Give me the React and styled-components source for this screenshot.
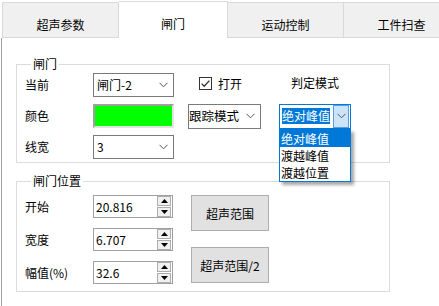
import React from 'react';
import styled, { createGlobalStyle, css } from 'styled-components';

const GlobalStyle = createGlobalStyle`
  html, body {
    margin: 0;
    padding: 0;
    background: #fff;
  }
  body {
    font-family: "Noto Sans CJK SC", "Liberation Sans", sans-serif;
    font-size: 12px;
    color: #000;
  }
`;

const Chevron = () => (
  <svg width="9" height="6" viewBox="0 0 9 6">
    <path d="M0.5 0.8 L4.5 4.8 L8.5 0.8" fill="none" stroke="#555" strokeWidth="1" />
  </svg>
);

const Tick = () => (
  <svg width="13" height="13" viewBox="0 0 13 13">
    <rect x="0.5" y="0.5" width="12" height="12" fill="#fff" stroke="#333" />
    <path d="M2.6 6.6 L5.2 9.2 L10.4 3.6" fill="none" stroke="#333" strokeWidth="1.3" />
  </svg>
);

const Arrow = ({ down }) => (
  <svg width="7" height="4" viewBox="0 0 7 4">
    <path d={down ? 'M0 0 H7 L3.5 4 Z' : 'M0 4 H7 L3.5 0 Z'} fill="#000" />
  </svg>
);

export default function App() {
  return (
    <Root>
      <GlobalStyle />
      <TabBar>
        <Tab width={117}>超声参数</Tab>
        <Tab width={109} active>闸门</Tab>
        <Tab width={116}>运动控制</Tab>
        <Tab width={116}>工件扫查</Tab>
      </TabBar>
      <Panel>
        <Group>
          <Legend>闸门</Legend>
          <GateGrid>
            <Label>当前</Label>
            <Combo>
              <span>闸门-2</span>
              <Chevron />
            </Combo>
            <CheckCell>
              <Tick />
              <span>打开</span>
            </CheckCell>
            <CenterText>判定模式</CenterText>

            <Label>颜色</Label>
            <ColorSwatch color="#00ff00" />
            <Combo tight>
              <span>跟踪模式</span>
              <Chevron />
            </Combo>
            <DropWrap>
              <FocusCombo>
                <Selected>绝对峰值</Selected>
                <DropButton>
                  <Chevron />
                </DropButton>
              </FocusCombo>
              <DropList>
                <DropItem active>绝对峰值</DropItem>
                <DropItem>渡越峰值</DropItem>
                <DropItem>渡越位置</DropItem>
              </DropList>
            </DropWrap>

            <Label>线宽</Label>
            <Combo>
              <span>3</span>
              <Chevron />
            </Combo>
          </GateGrid>
        </Group>

        <Group second>
          <Legend>闸门位置</Legend>
          <PosRow>
            <SpinGrid>
              <Label>开始</Label>
              <Spin>
                <span>20.816</span>
                <SpinButtons>
                  <SpinBtn><Arrow /></SpinBtn>
                  <SpinBtn><Arrow down /></SpinBtn>
                </SpinButtons>
              </Spin>
              <Label>宽度</Label>
              <Spin>
                <span>6.707</span>
                <SpinButtons>
                  <SpinBtn><Arrow /></SpinBtn>
                  <SpinBtn><Arrow down /></SpinBtn>
                </SpinButtons>
              </Spin>
              <Label>幅值(%)</Label>
              <Spin>
                <span>32.6</span>
                <SpinButtons>
                  <SpinBtn><Arrow /></SpinBtn>
                  <SpinBtn><Arrow down /></SpinBtn>
                </SpinButtons>
              </Spin>
            </SpinGrid>
            <ButtonCol>
              <PushButton>超声范围</PushButton>
              <PushButton>超声范围/2</PushButton>
            </ButtonCol>
          </PosRow>
        </Group>
      </Panel>
    </Root>
  );
}

const Root = styled.div`
  width: 439px;
  height: 306px;
  overflow: hidden;
  background: #fff;
  display: flex;
  flex-direction: column;
`;

const TabBar = styled.div`
  display: flex;
  align-items: flex-end;
  height: 38px;
  padding-left: 2px;
  flex-shrink: 0;
`;

const Tab = styled.div`
  flex: 0 0 ${p => p.width}px;
  box-sizing: border-box;
  height: 36px;
  display: flex;
  align-items: center;
  justify-content: center;
  padding-top: 9px;
  background: #f0f0f0;
  border: 1px solid #d9d9d9;
  border-left: none;
  white-space: nowrap;
  &:first-child {
    border-left: 1px solid #d9d9d9;
  }
  ${p => p.active && css`
    height: 37px;
    background: #fff;
    border-bottom: none;
    padding-top: 7px;
  `}
`;

const Panel = styled.div`
  flex: 1;
  margin-left: 1px;
  border-left: 1px solid #a0a0a0;
  padding: 18px 0 0 14px;
`;

const Group = styled.fieldset`
  box-sizing: border-box;
  width: 374px;
  margin: ${p => (p.second ? '10px' : '0')} 0 0 0;
  border: 1px solid #dcdcdc;
  padding: ${p => (p.second ? '6px 0 7px 8px' : '1px 0 3px 8px')};
  min-width: 0;
`;

const Legend = styled.legend`
  padding: 0 2px;
  margin-left: 6px;
  line-height: 16px;
  font-size: 12px;
`;

const GateGrid = styled.div`
  display: grid;
  grid-template-columns: 68px 95px 91px 72px;
  grid-auto-rows: 24px;
  row-gap: 7px;
  align-items: center;
`;

const Label = styled.div`
  line-height: 16px;
  white-space: nowrap;
`;

const Combo = styled.div`
  box-sizing: border-box;
  width: ${p => (p.tight ? '73px' : '81px')};
  height: ${p => (p.tight ? '25px' : '24px')};
  border: 1px solid #7a7a7a;
  background: #fff;
  display: flex;
  align-items: center;
  justify-content: space-between;
  padding: 0 5px 0 ${p => (p.tight ? '0' : '3px')};
  white-space: nowrap;
  span {
    line-height: 16px;
    font-size: ${p => (p.tight ? '12.5px' : '12px')};
  }
`;

const CheckCell = styled.div`
  display: flex;
  align-items: center;
  gap: 6px;
  padding-left: 11px;
  margin-top: -4px;
  svg {
    flex-shrink: 0;
  }
`;

const CenterText = styled.div`
  text-align: center;
  margin-top: -4px;
  line-height: 16px;
`;

const ColorSwatch = styled.div`
  box-sizing: border-box;
  width: 81px;
  height: 24px;
  background: ${p => p.color};
  border: 2px solid;
  border-color: #a0a0a0 #e3e3e3 #e3e3e3 #a0a0a0;
`;

const DropWrap = styled.div`
  position: relative;
  width: 72px;
  height: 25px;
`;

const FocusCombo = styled.div`
  box-sizing: border-box;
  width: 72px;
  height: 25px;
  border: 1px solid #0078d7;
  background: #fff;
  display: flex;
  align-items: center;
  justify-content: space-between;
  padding: 0 1px 0 2px;
`;

const Selected = styled.span`
  background: #0078d7;
  color: #fff;
  line-height: 16px;
  font-size: 12px;
  white-space: nowrap;
`;

const DropButton = styled.div`
  box-sizing: border-box;
  width: 16px;
  height: 23px;
  background: #cce4f7;
  border: 1px solid #569de5;
  display: flex;
  align-items: center;
  justify-content: center;
`;

const DropList = styled.div`
  position: absolute;
  left: 0;
  top: 25px;
  box-sizing: border-box;
  width: 72px;
  border: 1px solid #0078d7;
  background: #fff;
  box-shadow: 3px 3px 3px rgba(0, 0, 0, 0.35);
  z-index: 10;
`;

const DropItem = styled.div`
  height: 17px;
  line-height: 17px;
  padding-left: 1px;
  font-size: 12px;
  white-space: nowrap;
  overflow: hidden;
  ${p => p.active && css`
    background: #0078d7;
    color: #fff;
  `}
`;

const PosRow = styled.div`
  display: flex;
  align-items: flex-start;
`;

const SpinGrid = styled.div`
  display: grid;
  grid-template-columns: 68px 80px;
  grid-auto-rows: 23px;
  row-gap: 10px;
  align-items: center;
`;

const Spin = styled.div`
  box-sizing: border-box;
  width: 80px;
  height: 23px;
  border: 1px solid #a0a0a0;
  background: #fff;
  display: flex;
  align-items: center;
  justify-content: space-between;
  padding: 0 1px 0 2px;
  span {
    line-height: 16px;
  }
`;

const SpinButtons = styled.div`
  display: flex;
  flex-direction: column;
  gap: 1px;
  width: 14px;
`;

const SpinBtn = styled.div`
  box-sizing: border-box;
  height: 10px;
  background: #f0f0f0;
  border: 1px solid #adadad;
  display: flex;
  align-items: center;
  justify-content: center;
`;

const ButtonCol = styled.div`
  display: flex;
  flex-direction: column;
  gap: 16px;
  margin-left: 18px;
`;

const PushButton = styled.div`
  box-sizing: border-box;
  width: 78px;
  height: 36px;
  background: #e1e1e1;
  border: 1px solid #adadad;
  display: flex;
  align-items: center;
  justify-content: center;
  white-space: nowrap;
`;
